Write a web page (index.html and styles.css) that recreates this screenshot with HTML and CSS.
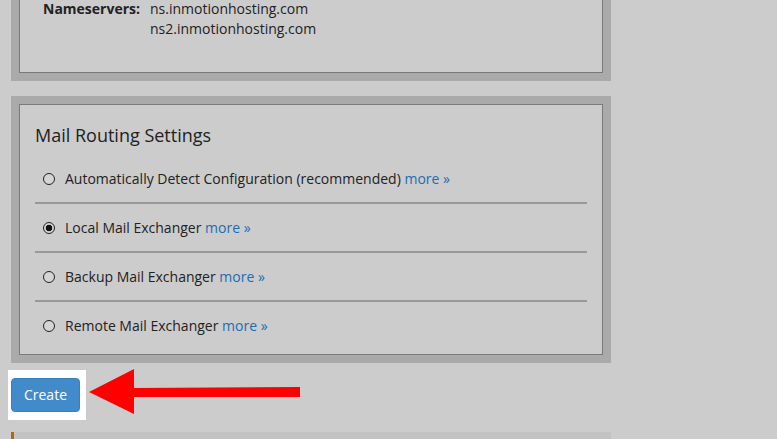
FILE: index.html
```html
<!DOCTYPE html>
<html lang="en">
<head>
<meta charset="utf-8">
<title>Mail Routing Settings</title>
<link rel="stylesheet" href="styles.css">
</head>
<body>
  <section class="panel panel-top">
    <div class="panel-inner ns-inner">
      <div class="ns-grid">
        <span class="ns-label">Nameservers:</span>
        <span class="ns-value">ns.inmotionhosting.com<br>ns2.inmotionhosting.com</span>
      </div>
    </div>
  </section>

  <section class="panel panel-mail">
    <div class="panel-inner mail-inner">
      <h2 class="mail-title">Mail Routing Settings</h2>
      <ul class="route-list">
        <li class="route-row"><input type="radio" name="route" class="radio"><span>Automatically Detect Configuration (recommended) <a href="#" class="more">more »</a></span></li>
        <li class="route-row"><input type="radio" name="route" class="radio" checked><span>Local Mail Exchanger <a href="#" class="more">more »</a></span></li>
        <li class="route-row"><input type="radio" name="route" class="radio"><span>Backup Mail Exchanger <a href="#" class="more">more »</a></span></li>
        <li class="route-row"><input type="radio" name="route" class="radio"><span>Remote Mail Exchanger <a href="#" class="more">more »</a></span></li>
      </ul>
    </div>
  </section>

  <div class="create-row">
    <div class="highlight"><button class="btn-create" type="button">Create</button></div>
    <svg class="arrow" width="212" height="46" viewBox="0 0 212 46" aria-hidden="true">
      <polygon points="0,23 45,0 45,19 211,18 211,28 45,28 45,45" fill="#ff0000"/>
    </svg>
  </div>

  <section class="panel-next"></section>
</body>
</html>
```

FILE: styles.css
```css
html, body {
  margin: 0;
  padding: 0;
  overflow: hidden;
}
body {
  background: #cccccc;
  font-family: "Open Sans", "Liberation Sans", sans-serif;
  font-size: 14px;
  color: #222222;
  height: 439px;
}
.panel {
  width: 600px;
  box-sizing: border-box;
  margin-left: 11px;
  padding: 8px;
  background: #aaaaaa;
}
.panel-inner {
  border: 1px solid #7a7a7a;
  background: #cccccc;
}
.panel-top {
  margin-top: -30px;
}
.ns-inner {
  padding: 20px 0 33px;
}
.ns-grid {
  display: grid;
  grid-template-columns: 120px auto;
  column-gap: 10px;
  line-height: 20px;
}
.ns-label {
  font-weight: 700;
  text-align: right;
}
.panel-mail {
  margin-top: 15px;
}
.mail-inner {
  padding: 18px 15px 5px 15px;
}
.mail-title {
  margin: 0 0 8px;
  font-size: 18px;
  font-weight: 400;
  line-height: 24px;
  color: #222222;
}
.route-list {
  list-style: none;
  margin: 0;
  padding: 0;
}
.route-row {
  display: flex;
  align-items: center;
  gap: 10px;
  padding: 13.5px 0 13.5px 8px;
  line-height: 20px;
  border-bottom: 2px solid #999999;
}
.route-row:last-child {
  border-bottom: 0;
}
.radio {
  appearance: none;
  -webkit-appearance: none;
  width: 12px;
  height: 12px;
  margin: 0;
  border: 1px solid #222222;
  border-radius: 50%;
  background: #d4d4d4;
  box-sizing: border-box;
  flex: none;
}
.radio:checked {
  background: radial-gradient(circle, #111111 0 3px, #d4d4d4 3.6px);
}
.more {
  color: #1b6cb3;
  text-decoration: none;
}
.create-row {
  position: relative;
  display: flex;
  margin-top: 7px;
  margin-left: 8px;
}
.highlight {
  background: #ffffff;
  padding: 8px 6px 8px 3px;
}
.btn-create {
  display: block;
  width: 69px;
  height: 34px;
  padding: 0 0 2px;
  border: 1px solid #3a7fbd;
  border-radius: 4px;
  background: #428bca;
  color: #ffffff;
  font-family: "Open Sans", "Liberation Sans", sans-serif;
  font-size: 14px;
}
.arrow {
  position: absolute;
  left: 81px;
  top: -1px;
}
.panel-next {
  margin: 12px 0 0 11px;
  width: 600px;
  height: 7px;
  box-sizing: border-box;
  background: #c3c3c3;
  border-left: 3px solid #c0600f;
}
```
